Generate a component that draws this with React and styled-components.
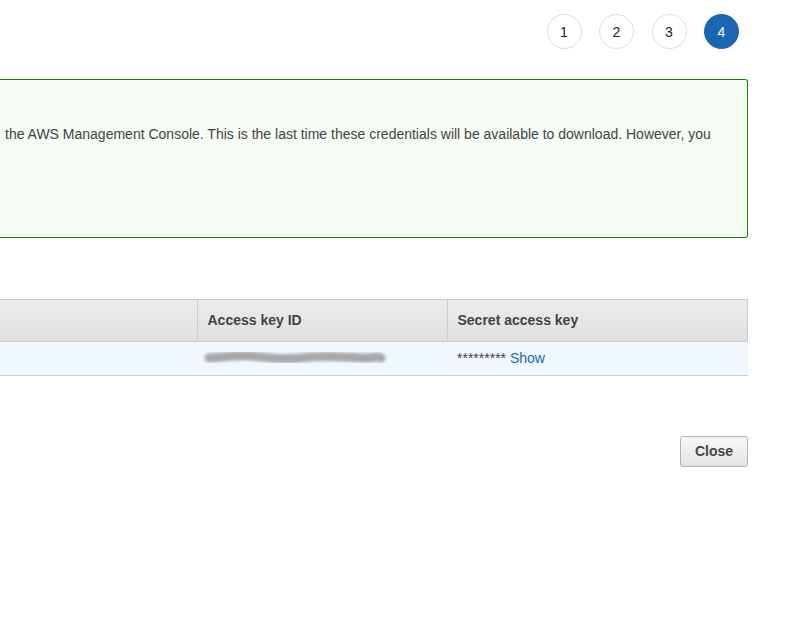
import React from "react";
import styled, { createGlobalStyle } from "styled-components";

const GlobalStyle = createGlobalStyle`
  html, body {
    margin: 0;
    padding: 0;
    background: #fff;
  }
  body {
    font-family: "Liberation Sans", Arial, sans-serif;
    font-size: 14px;
    color: #444;
  }
`;

const Page = styled.div`
  width: 748px;
  display: flex;
  flex-direction: column;
`;

const Steps = styled.ol`
  list-style: none;
  margin: 14px 9px 0 0;
  padding: 0;
  display: flex;
  justify-content: flex-end;
  gap: 17.5px;
`;

const Step = styled.li`
  width: 35px;
  height: 35px;
  box-sizing: border-box;
  border-radius: 50%;
  border: 1px solid ${(p) => (p.active ? "#1b66b3" : "#dddddd")};
  background: ${(p) => (p.active ? "#1b66b3" : "#fff")};
  color: ${(p) => (p.active ? "#fff" : "#222")};
  display: flex;
  align-items: center;
  justify-content: center;
  font-size: 14px;
`;

const SuccessBox = styled.div`
  margin-top: 30px;
  height: 159px;
  box-sizing: border-box;
  border: 1px solid #1d8102;
  border-left: none;
  border-radius: 0 3px 3px 0;
  background: #f5fdf5;
  padding: 45px 0 0 5px;
  white-space: nowrap;
  overflow: hidden;
  line-height: 18px;
`;

const Table = styled.table`
  margin-top: 61px;
  width: 100%;
  border-collapse: collapse;
  table-layout: fixed;
`;

const HeadCell = styled.th`
  height: 42px;
  box-sizing: border-box;
  padding: 0 10px 1px;
  text-align: left;
  font-weight: bold;
  color: #444;
  background: linear-gradient(#ececec, #e0e0e0);
  border-top: 1px solid #cccccc;
  border-bottom: 1px solid #cccccc;
  border-left: ${(p) => (p.first ? "none" : "1px solid #cccccc")};
  border-right: ${(p) => (p.last ? "1px solid #cccccc" : "none")};
  width: ${(p) => p.w};
`;

const Cell = styled.td`
  height: 34px;
  box-sizing: border-box;
  padding: 0 10px 1px;
  background: #f0f7fd;
  border-bottom: 1px solid #cccccc;
  vertical-align: middle;
`;

const ShowLink = styled.a`
  color: #1b66b3;
  text-decoration: none;
  cursor: pointer;
`;

const Footer = styled.div`
  margin-top: 60px;
  display: flex;
  justify-content: flex-end;
`;

const Button = styled.button`
  width: 68px;
  height: 31px;
  padding: 0 0 1px;
  border: 1px solid #b2b2b2;
  border-radius: 3px;
  background: linear-gradient(#f8f8f8, #e3e3e3);
  font-family: "Liberation Sans", Arial, sans-serif;
  font-size: 14px;
  font-weight: bold;
  color: #444;
  cursor: pointer;
`;

const BlurredKey = () => (
  <svg width="186" height="20" viewBox="0 0 186 20" style={{ display: "block", marginLeft: -6 }}>
    <defs>
      <filter id="blur" x="-10%" y="-100%" width="120%" height="300%">
        <feGaussianBlur stdDeviation="1.8" />
      </filter>
    </defs>
    <path
      d="M8 10 C25 9 40 6 60 9 C80 12 95 11 110 9 C130 7 150 10 165 10 C172 10 176 8 180 10"
      stroke="#a8a8a8"
      strokeWidth="9"
      strokeLinecap="round"
      fill="none"
      filter="url(#blur)"
    />
  </svg>
);

export default function App() {
  return (
    <>
      <GlobalStyle />
      <Page>
        <Steps>
          {[1, 2, 3, 4].map((n) => (
            <Step key={n} active={n === 4}>
              {n}
            </Step>
          ))}
        </Steps>
        <SuccessBox>
          the AWS Management Console. This is the last time these credentials
          will be available to download. However, you
        </SuccessBox>
        <Table>
          <thead>
            <tr>
              <HeadCell first w="197px"></HeadCell>
              <HeadCell w="250px">Access key ID</HeadCell>
              <HeadCell last>Secret access key</HeadCell>
            </tr>
          </thead>
          <tbody>
            <tr>
              <Cell></Cell>
              <Cell>
                <BlurredKey />
              </Cell>
              <Cell>
                ********* <ShowLink>Show</ShowLink>
              </Cell>
            </tr>
          </tbody>
        </Table>
        <Footer>
          <Button>Close</Button>
        </Footer>
      </Page>
    </>
  );
}
